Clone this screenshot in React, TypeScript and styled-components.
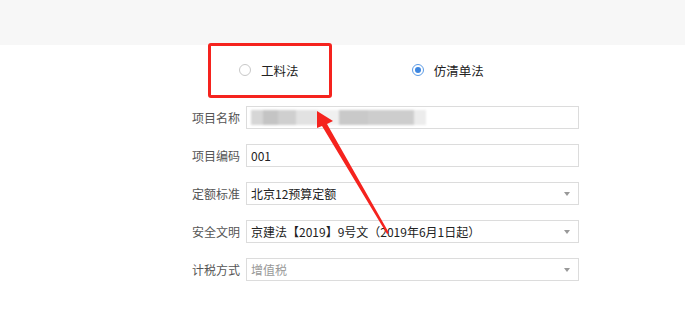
import React from "react";
import styled, { createGlobalStyle } from "styled-components";

const Global = createGlobalStyle`
  html, body { margin: 0; padding: 0; background: #fff; }
  body { font-family: "Microsoft YaHei", "Noto Sans CJK SC", "Noto Sans", sans-serif; font-size: 12px; color: #333; }
`;

const Page = styled.div`
  position: relative;
  width: 685px;
  height: 326px;
  overflow: hidden;
  background: #fff;
`;

const TopBand = styled.div`
  height: 45px;
  background: #f7f7f7;
`;

const Form = styled.div`
  margin-left: 192px;
  width: 387px;
  display: flex;
  flex-direction: column;
`;

const RadioRow = styled.div`
  height: 50px;
  display: flex;
  align-items: center;
  padding-left: 47px;
  margin-bottom: 11px;
`;

const RadioOption = styled.label<{ $width: number }>`
  width: ${(p) => p.$width}px;
  display: flex;
  align-items: center;
  gap: 10px;
  font-size: 12.5px;
  color: #222;
`;

const RadioCircle = styled.span<{ $on?: boolean }>`
  width: 12px;
  height: 12px;
  border-radius: 50%;
  box-sizing: border-box;
  border: 1px solid ${(p) => (p.$on ? "#5b9be6" : "#c8c8c8")};
  background: #fff;
  display: flex;
  align-items: center;
  justify-content: center;
  &::after {
    content: "";
    width: 6px;
    height: 6px;
    border-radius: 50%;
    background: ${(p) => (p.$on ? "#3d86e0" : "transparent")};
  }
`;

const Rows = styled.div`
  display: flex;
  flex-direction: column;
  gap: 15px;
`;

const Row = styled.div`
  display: flex;
  align-items: center;
  height: 23px;
`;

const Label = styled.span`
  width: 54px;
  flex: none;
  color: #555;
  font-size: 12px;
`;

const Field = styled.div<{ $muted?: boolean }>`
  flex: 1;
  height: 23px;
  box-sizing: border-box;
  border: 1px solid #dcdcdc;
  background: #fff;
  display: flex;
  align-items: center;
  padding: 0 8px 0 4px;
  color: ${(p) => (p.$muted ? "#999" : "#222")};
  font-size: 12px;
`;

const Value = styled.span`
  flex: 1;
  white-space: nowrap;
`;

const Caret = styled.span`
  width: 0;
  height: 0;
  border-left: 3.5px solid transparent;
  border-right: 3.5px solid transparent;
  border-top: 4px solid #999;
`;

const Blur = styled.div`
  display: flex;
  height: 15px;
  filter: blur(1.2px);
`;

const BlurBlock = styled.span<{ $c: string; $w: number }>`
  height: 100%;
  width: ${(p) => p.$w}px;
  background: ${(p) => p.$c};
`;

const Annotation = styled.div`
  position: absolute;
  left: 208px;
  top: 43px;
  width: 124px;
  height: 55px;
  box-sizing: border-box;
  border: 3px solid #f5231e;
  border-radius: 3px;
  pointer-events: none;
`;

const ArrowSvg = styled.svg`
  position: absolute;
  left: 0;
  top: 0;
  pointer-events: none;
`;

const blocks: [number, string][] = [
  [12, "#d6d6d6"],
  [15, "#c4c4c4"],
  [18, "#cfcfcf"],
  [22, "#e2e2e2"],
  [21, "#f0f0f0"],
  [29, "#c9c9c9"],
  [46, "#cdcdcd"],
  [12, "#ececec"],
];

export default function App() {
  return (
    <Page>
      <Global />
      <TopBand />
      <Form>
        <RadioRow>
          <RadioOption $width={183}>
            <RadioCircle />
            工料法
          </RadioOption>
          <RadioOption $width={177}>
            <RadioCircle $on />
            仿清单法
          </RadioOption>
        </RadioRow>
        <Rows>
          <Row>
            <Label>项目名称</Label>
            <Field>
              <Blur>
                {blocks.map(([w, c], i) => (
                  <BlurBlock key={i} $c={c} $w={w} />
                ))}
              </Blur>
            </Field>
          </Row>
          <Row>
            <Label>项目编码</Label>
            <Field>
              <Value>001</Value>
            </Field>
          </Row>
          <Row>
            <Label>定额标准</Label>
            <Field>
              <Value>北京12预算定额</Value>
              <Caret />
            </Field>
          </Row>
          <Row>
            <Label>安全文明</Label>
            <Field>
              <Value>京建法【2019】9号文（2019年6月1日起）</Value>
              <Caret />
            </Field>
          </Row>
          <Row>
            <Label>计税方式</Label>
            <Field $muted>
              <Value>增值税</Value>
              <Caret />
            </Field>
          </Row>
        </Rows>
      </Form>
      <Annotation />
      <ArrowSvg width="685" height="326" viewBox="0 0 685 326">
        <polygon points="317,111 333,121 327,124 389,233 387,234 322,126 317,128" fill="#f5231e" />
      </ArrowSvg>
    </Page>
  );
}
